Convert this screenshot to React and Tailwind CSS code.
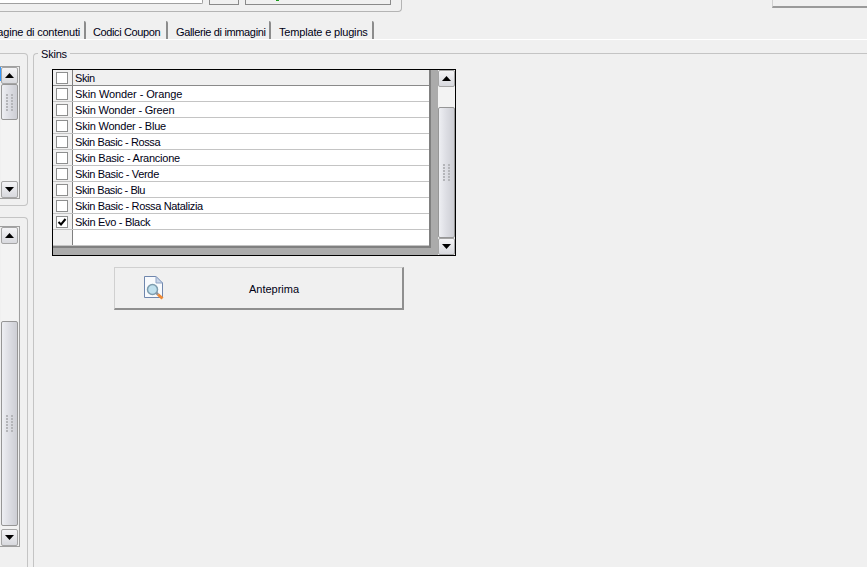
const skins = [
  { label: 'Skin Wonder - Orange', track: 'tracking-[-0.1px]' },
  { label: 'Skin Wonder - Green', track: 'tracking-[-0.2px]' },
  { label: 'Skin Wonder - Blue', track: 'tracking-[-0.2px]' },
  { label: 'Skin Basic - Rossa', track: 'tracking-[-0.4px]' },
  { label: 'Skin Basic - Arancione', track: 'tracking-[-0.23px]' },
  { label: 'Skin Basic - Verde', track: 'tracking-[-0.33px]' },
  { label: 'Skin Basic - Blu', track: 'tracking-[-0.44px]' },
  { label: 'Skin Basic - Rossa Natalizia', track: 'tracking-[-0.35px]' },
  { label: 'Skin Evo - Black', track: 'tracking-[-0.3px]' },
]

const tabs = [
  { label: 'Pagine di contenuti', cls: 'w-[86px] justify-end pr-[4px] tracking-[-0.2px]' },
  { label: 'Codici Coupon', cls: 'w-[82px] pl-[7px] tracking-[-0.38px]' },
  { label: 'Gallerie di immagini', cls: 'w-[103px] pl-[8px] tracking-[-0.35px]' },
  { label: 'Template e plugins', cls: 'w-[103px] pl-[8px] tracking-[-0.17px]' },
]

function Arrow({ down }) {
  return (
    <svg width="9" height="5" viewBox="0 0 9 5" className="block">
      <path d={down ? 'M0 0H9L4.5 5Z' : 'M0 5H9L4.5 0Z'} fill="#000" />
    </svg>
  )
}

function ArrowBtn({ down }) {
  return (
    <div className="h-[17px] shrink-0 flex items-center justify-center rounded-[2px] border border-[#a5a5a5] bg-linear-to-b from-[#f4f4f6] to-[#d8d9de]">
      <Arrow down={down} />
    </div>
  )
}

function Grip() {
  return (
    <div className="grid grid-cols-2 gap-x-[3px] gap-y-[1px]">
      {Array.from({ length: 12 }).map((_, i) => (
        <div key={i} className="w-[2px] h-[2px] bg-[#b4b5b9]" />
      ))}
    </div>
  )
}

function Scrollbar({ before, thumb }) {
  return (
    <div className="w-[17px] h-full flex flex-col shrink-0">
      <ArrowBtn />
      <div className="shrink-0 bg-[#f3f3f3]" style={{ height: before }} />
      <div
        className="shrink-0 flex items-center justify-center rounded-[2px] border border-[#969696] bg-linear-to-r from-[#eeeff3] via-[#dcdde3] to-[#cdced4]"
        style={{ height: thumb }}
      >
        <Grip />
      </div>
      <div className="flex-1 bg-[#f3f3f3]" />
      <ArrowBtn down />
    </div>
  )
}

function CheckBox({ checked }) {
  return (
    <div className="mr-[1px] w-[12px] h-[12px] border border-[#8e8f8f] bg-white flex items-center justify-center">
      {checked && (
        <svg width="10" height="10" viewBox="0 0 10 10">
          <path d="M1.5 5l2.5 2.5L8.5 2" fill="none" stroke="#000" strokeWidth="2" />
        </svg>
      )}
    </div>
  )
}

function Row({ label, checked, head, empty, track }) {
  return (
    <div className={`h-[16px] flex ${head ? 'border-b border-[#8a8a8a]' : 'border-b border-[#c4c4c4]'}`}>
      <div className="w-[20px] shrink-0 bg-[#f0f0f0] border-r border-[#7f7f7f] flex items-center justify-center">
        {!empty && <CheckBox checked={checked} />}
      </div>
      <div className={`flex-1 pl-[2px] leading-[16px] truncate ${track || ''} ${head ? 'bg-[#f0f0f0]' : 'bg-white'}`}>{label}</div>
    </div>
  )
}

function PreviewIcon() {
  return (
    <svg width="22" height="25" viewBox="0 0 22 25">
      <path d="M1.5 1.5H13L19.5 8V22.5H1.5Z" fill="#f8fafd" stroke="#6f86ad" />
      <path d="M13 1.5V8H19.5Z" fill="#c9d6ea" stroke="#8fa3c4" />
      <circle cx="9.5" cy="14.5" r="5" fill="#bfe0ee" stroke="#7d9cae" strokeWidth="1.5" />
      <path d="M13.5 18L15 19.5" stroke="#8a8f98" strokeWidth="2.5" />
      <path d="M15 19.5L19.5 23.5" stroke="#ee8a35" strokeWidth="3" />
    </svg>
  )
}

export default function App() {
  return (
    <div className="w-[867px] h-[567px] overflow-hidden bg-[#f0f0f0] flex flex-col text-[11px] text-[#000014] font-['Liberation_Sans',Arial,sans-serif]">
      {/* top toolbar, cut off by the crop */}
      <div className="h-[12px] shrink-0 flex justify-between">
        <div className="w-[402px] h-[12px] border-r border-b border-[#b4b4b4] rounded-br-[4px] flex pl-0">
          <div className="w-[203px] h-[4px] border-r border-b border-[#a0a0a0] rounded-br-[2px] bg-white" />
          <div className="ml-[6px] w-[30px] h-[5px] border-x border-b border-[#8a8a8a]" />
          <div className="ml-[6px] w-[146px] h-[5px] border-x border-b border-[#8a8a8a] pl-[30px]">
            <div className="w-[3px] h-[1px] bg-[#1a9c1a]" />
          </div>
        </div>
        <div className="w-[95px] h-[8px] border-l border-b-2 border-l-[#d0d0d0] border-b-[#9a9a9a]" />
      </div>

      {/* tabs */}
      <div className="mt-[9px] h-[19px] shrink-0 flex overflow-hidden border-b border-white">
        {tabs.map((t, i) => (
          <div key={i} className={`h-full shrink-0 flex items-center pt-[4px] whitespace-nowrap overflow-hidden border-r-2 border-r-[#8c8c8c] rounded-tr-[2px] ${t.cls}`}>
            {t.label}
          </div>
        ))}
      </div>

      <div className="mt-[13px] flex-1 min-h-0 flex">
        {/* left column, mostly cut off */}
        <div className="w-[28px] shrink-0 flex flex-col">
          <div className="h-[153px] shrink-0 border-t border-r border-b border-[#c4c4c4] rounded-r-[4px] pt-[12px]">
            <div className="w-[20px] h-[133px] border-r border-t border-b border-[#9f9f9f] flex">
              <div className="w-[1px] h-[14px] bg-[#3399ff] shrink-0" />
              <div className="h-full"><Scrollbar before={0} thumb={36} /></div>
            </div>
          </div>
          <div className="mt-[11px] flex-1 border-t border-r border-[#c4c4c4] rounded-tr-[4px] pt-[8px]">
            <div className="w-[20px] h-[321px] border-r border-t border-b border-[#9f9f9f] flex pl-[1px]">
              <div className="h-full"><Scrollbar before={77} thumb={205} /></div>
            </div>
          </div>
        </div>

        {/* Skins group */}
        <div className="ml-[5px] flex-1 border-t border-l border-[#c4c4c4] rounded-tl-[4px] pl-[18px]">
          <div className="-mt-[9px] ml-[-14px] w-fit bg-[#f0f0f0] px-[3px] leading-[17px] tracking-[-0.2px] pt-[1px] h-[17px]">Skins</div>
          <div className="mt-[7px] w-[404px] h-[187px] border border-black flex">
            <div className="w-[385px] h-full bg-[#ababab] shrink-0">
              <div className="w-[378px] border-r-2 border-b-2 border-[#808080]">
                <Row head label="Skin" track="tracking-[-0.4px]" />
                {skins.map((s) => (
                  <Row key={s.label} label={s.label} track={s.track} checked={s.label === 'Skin Evo - Black'} />
                ))}
                <Row empty label="" />
              </div>
            </div>
            <Scrollbar before={20} thumb={131} />
          </div>

          <button className="mt-[11px] ml-[62px] w-[290px] h-[43px] flex items-center border border-[#d0d0d0] border-r-2 border-b-2 border-r-[#8f8f8f] border-b-[#8f8f8f] bg-[#f0f0f0] relative">
            <span className="absolute left-[28px] top-[7px]"><PreviewIcon /></span>
            <span className="w-full pl-[31px] pt-[2px] text-center">Anteprima</span>
          </button>
        </div>
      </div>
    </div>
  )
}
